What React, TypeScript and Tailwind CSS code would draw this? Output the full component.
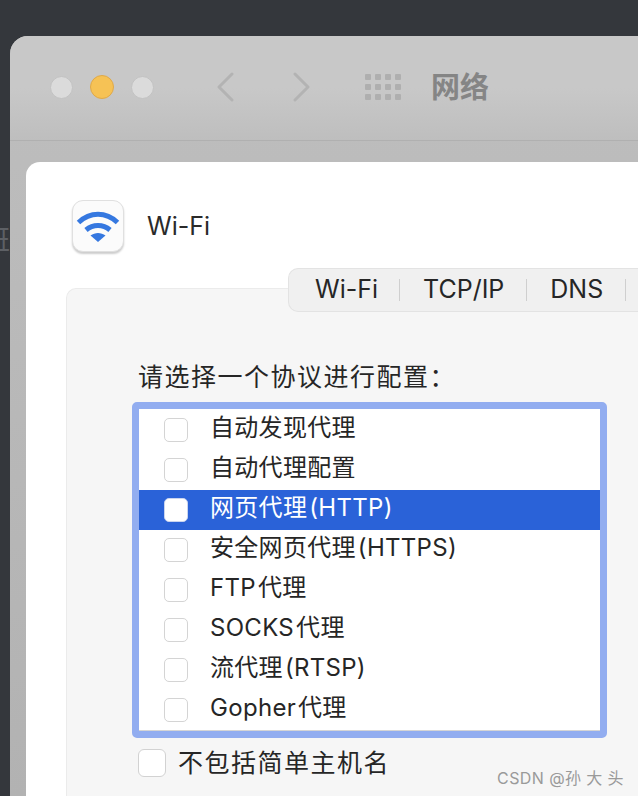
const SANS = "font-['Inter','Noto_Sans_CJK_SC',sans-serif]";

function Box({ big, selected }: { big?: boolean; selected?: boolean }) {
  return (
    <span
      className={
        big
          ? "block h-[28px] w-[28px] shrink-0 rounded-[6px] border border-[#d2d2d2] bg-white"
          : selected
          ? "block h-[24px] w-[24px] shrink-0 rounded-[5px] border border-[#c9d4ee] bg-white"
          : "block h-[24px] w-[24px] shrink-0 rounded-[5px] border border-[#d4d4d4] bg-white"
      }
    />
  );
}

const rows = [
  "自动发现代理",
  "自动代理配置",
  "网页代理 (HTTP)",
  "安全网页代理 (HTTPS)",
  "FTP 代理",
  "SOCKS 代理",
  "流代理 (RTSP)",
  "Gopher 代理",
];

export default function App() {
  return (
    <div className={`${SANS} relative flex h-[796px] w-[638px] overflow-hidden bg-[#34373c] pl-[10px] pt-[36px]`}>
      <span className="absolute left-[-18px] top-[226px] text-[28px] leading-none text-[#5d6065]">班</span>
      <div className="flex min-w-0 flex-1 flex-col rounded-tl-[18px] bg-gradient-to-b from-[#bebebe] to-[#b2b2b2]">
        <div className="flex h-[105px] shrink-0 items-center rounded-tl-[18px] border-b border-[#b0b0b0] bg-gradient-to-b from-[#c8c8c8] from-50% to-[#bebebe] pb-[2px] pl-[40px]">
          <span className="block h-[23px] w-[23px] rounded-full border border-[#c2c2c2] bg-[#dbdbdb]" />
          <span className="ml-[17px] block h-[24px] w-[24px] rounded-full border border-[#dfa94a] bg-[#f6c255]" />
          <span className="ml-[17px] block h-[23px] w-[23px] rounded-full border border-[#c2c2c2] bg-[#dbdbdb]" />
          <svg className="ml-[62px]" width="20" height="30" viewBox="0 0 20 30" fill="none" stroke="#b3b3b3" strokeWidth="3" strokeLinecap="round" strokeLinejoin="round">
            <path d="M16 2 3 15l13 13" />
          </svg>
          <svg className="ml-[55px]" width="20" height="30" viewBox="0 0 20 30" fill="none" stroke="#b3b3b3" strokeWidth="3" strokeLinecap="round" strokeLinejoin="round">
            <path d="M4 2l13 13L4 28" />
          </svg>
          <div className="ml-[54px] grid grid-cols-4 gap-[4px]">
            {Array.from({ length: 12 }).map((_, i) => (
              <span key={i} className="block h-[6px] w-[6px] rounded-[1px] bg-[#afafaf]" />
            ))}
          </div>
          <span className="ml-[30px] text-[29px] font-bold leading-none text-[#858585]">网络</span>
        </div>
        <div className="ml-[16px] mt-[21px] flex min-h-0 flex-1 flex-col rounded-tl-[14px] bg-white pl-[46px] pt-[38px]">
          <div className="flex items-center">
            <div className="flex h-[52px] w-[52px] items-center justify-center rounded-[11px] border border-[#e0e0e0] bg-[#fbfbfb] shadow-[0_2px_2px_rgba(0,0,0,0.2)]">
              <svg width="44" height="34" viewBox="0 0 44 34" fill="none" stroke="#3578e0" strokeWidth="5">
                <path d="M2.5 13.5C14 2.5 30 2.500 41.500 13.500" />
                <path d="M10 21c7-6 17-6 24 0" />
                <path d="M22 33 14.500 26.500C19 23 25 23 29.500 26.500Z" fill="#3578e0" stroke="none" />
              </svg>
            </div>
            <span className="ml-[23px] pt-[1px] text-[25px] leading-none text-[#2a2a2a]">Wi-Fi</span>
          </div>
          <div className="relative ml-[-6px] mt-[36px] flex-1 rounded-tl-[10px] border-l border-t border-[#ebebeb] bg-[#f6f6f6] pl-[71px] pt-[71px]">
            <div className="absolute left-[221px] right-0 top-[-21px] flex h-[44px] items-center rounded-l-[10px] border border-r-0 border-[#e3e3e3] bg-[#f0f0f0] pb-[1px] pl-[26px] text-[25px] leading-none text-[#262626]">
              <span>Wi-Fi</span>
              <span className="ml-[21px] h-[22px] w-px bg-[#cfcfcf]" />
              <span className="ml-[23px]">TCP/IP</span>
              <span className="ml-[22px] h-[22px] w-px bg-[#cfcfcf]" />
              <span className="ml-[23px]">DNS</span>
              <span className="ml-[22px] h-[22px] w-px bg-[#cfcfcf]" />
            </div>
            <div className="text-[25px] leading-[34px] tracking-[1.5px] text-[#262626]">请选择一个协议进行配置：</div>
            <div className="ml-[-6px] mt-[8px] w-[475px] rounded-[5px] border-[7px] border-[#92adf0] bg-white pt-px">
              <div className="border-b border-[#d5d5d5]">
                {rows.map((r, i) => (
                  <div
                    key={r}
                    className={
                      i === 2
                        ? "flex h-[40px] items-center bg-[#2a62d8] pl-[25px] text-[#ffffff]"
                        : "flex h-[40px] items-center pl-[25px] text-[#262626]"
                    }
                  >
                    <Box selected={i === 2} />
                    <span className="ml-[22px] pb-[4px] text-[24px] leading-none tracking-[0.3px] [word-spacing:-5px]">{r}</span>
                  </div>
                ))}
              </div>
            </div>
            <div className="ml-0 mt-[11px] flex items-center">
              <Box big />
              <span className="ml-[12px] text-[25px] leading-none tracking-[1.5px] text-[#262626]">不包括简单主机名</span>
            </div>
            <span className="absolute bottom-[10px] right-[14px] text-[16px] leading-none tracking-[0.4px] text-[#9a9a9a]">CSDN @孙 大 头</span>
          </div>
        </div>
      </div>
    </div>
  );
}
